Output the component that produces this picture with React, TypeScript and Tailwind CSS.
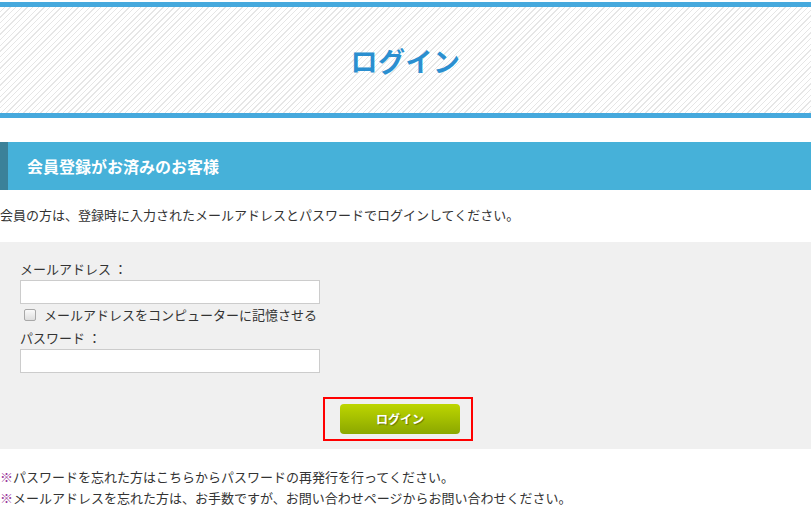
import React from "react";

const font = { fontFamily: '"Noto Sans CJK JP", "Noto Sans", sans-serif' };

export default function App() {
  return (
    <div className="w-[811px] h-[513px] bg-white text-[#333] overflow-hidden" style={font}>
      <div className="pt-[2px]">
        <div className="border-y-[5px] border-[#46a9dd] h-[116px] flex items-center justify-center bg-[repeating-linear-gradient(135deg,#ffffff_0px,#ffffff_3px,#e6e6e6_3px,#e6e6e6_4px)]">
          <h1 className="text-[27px] font-bold text-[#2b8fd0] leading-none tracking-[0.5px]">ログイン</h1>
        </div>
      </div>

      <div className="mt-[24px] h-[48px] bg-[#46b1d9] border-l-[8px] border-[#3b8199] flex items-center pl-[19px]">
        <h2 className="text-[16px] font-bold text-white leading-none">会員登録がお済みのお客様</h2>
      </div>

      <p className="mt-[15px] mb-[17px] text-[13px] leading-[20px] text-[#333]">
        会員の方は、登録時に入力されたメールアドレスとパスワードでログインしてください。
      </p>

      <div className="bg-[#f0f0f0] h-[207px] pt-[17px] px-[20px]">
        <div className="text-[13px] leading-[20px] text-[#333]">メールアドレス ：</div>
        <div className="mt-[1px] w-[300px] h-[24px] bg-white border border-[#cccccc]"></div>
        <label className="flex items-center h-[20px] mt-[1px] text-[13px] text-[#333]">
          <span className="ml-[4px] w-[12px] h-[12px] rounded-[2px] border border-[#a8a8a8] bg-[linear-gradient(#fafafa,#dedede)]"></span>
          <span className="ml-[8px] leading-[20px]">メールアドレスをコンピューターに記憶させる</span>
        </label>
        <div className="mt-[3px] text-[13px] leading-[20px] text-[#333]">パスワード ：</div>
        <div className="mt-[1px] w-[300px] h-[24px] bg-white border border-[#cccccc]"></div>
        <div className="mt-[24px] flex">
          <div className="ml-[303px] border-2 border-[#ff0000] w-[150px] h-[44px] flex items-center pl-[15px]">
            <div className="w-[120px] h-[30px] rounded-[4px] bg-[linear-gradient(#bdd600,#8ba700)] flex items-center justify-center text-white font-bold text-[12px] [text-shadow:1px_1px_1px_rgba(0,0,0,0.35)]">
              ログイン
            </div>
          </div>
        </div>
      </div>

      <div className="mt-[17px] text-[13px] leading-[21px] text-[#333]">
        <p><span className="text-[#9b3a9b]">※</span>パスワードを忘れた方はこちらからパスワードの再発行を行ってください。</p>
        <p><span className="text-[#9b3a9b]">※</span>メールアドレスを忘れた方は、お手数ですが、お問い合わせページからお問い合わせください。</p>
      </div>
    </div>
  );
}
